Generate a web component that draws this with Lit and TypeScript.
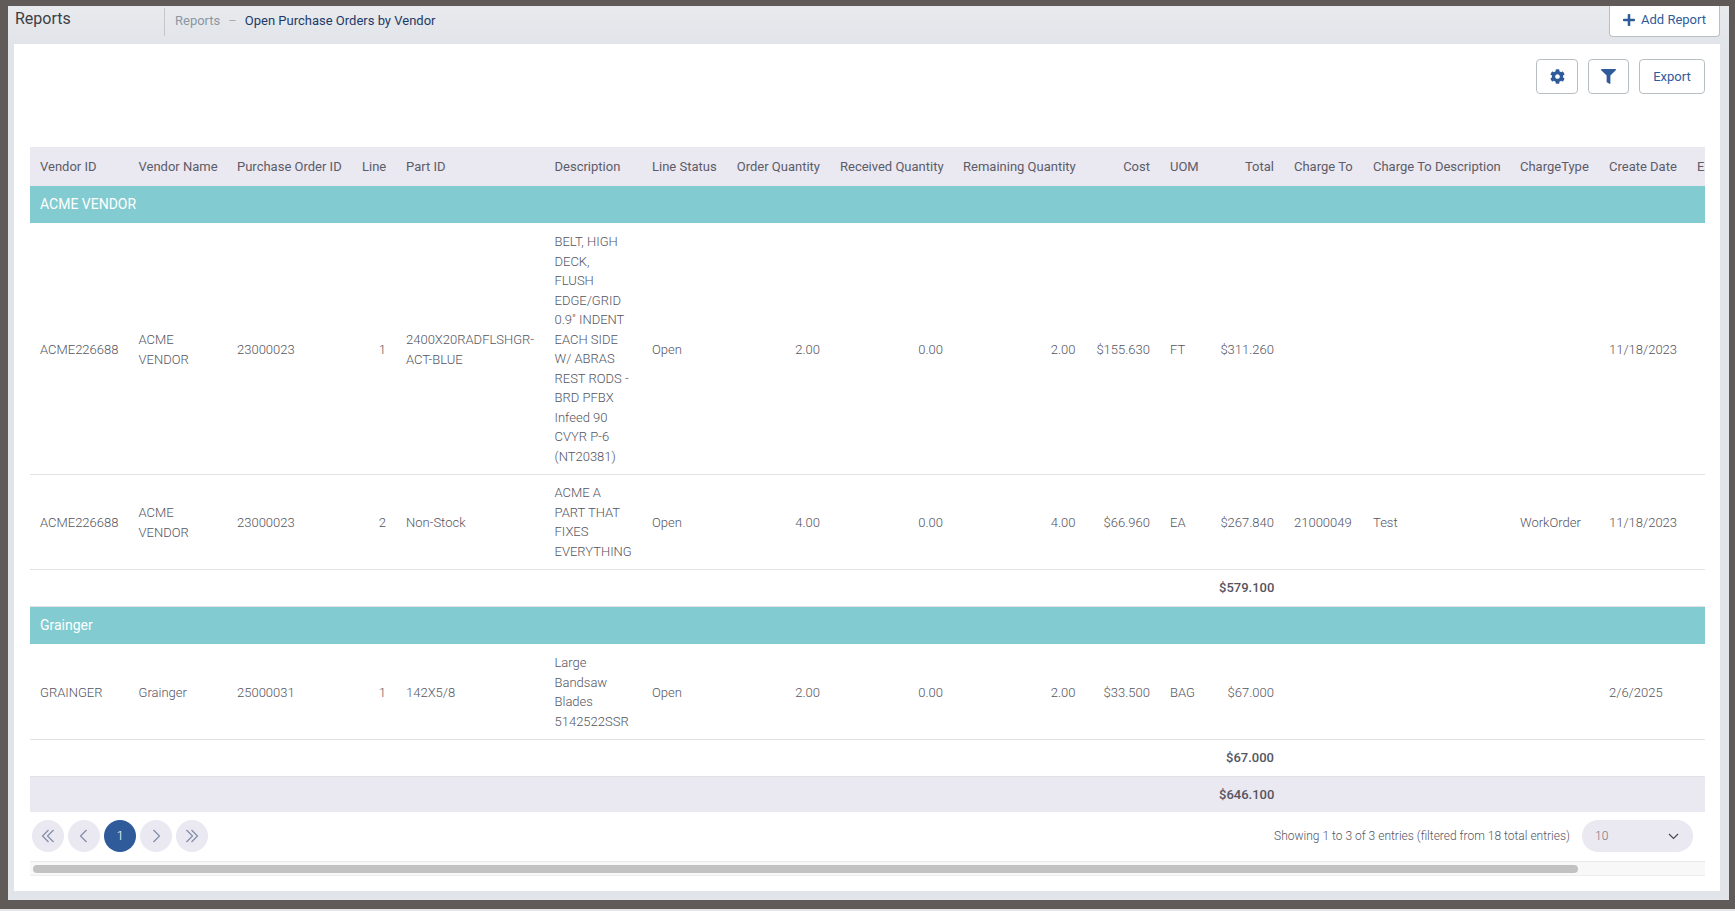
import { LitElement, html, css, svg } from "lit";
import { customElement } from "lit/decorators.js";

const COLS: [string, number, boolean][] = [
  ["Vendor ID", 98.5, false],
  ["Vendor Name", 98.5, false],
  ["Purchase Order ID", 125, false],
  ["Line", 44, true],
  ["Part ID", 148.5, false],
  ["Description", 97.5, false],
  ["Line Status", 84, false],
  ["Order Quantity", 104, true],
  ["Received Quantity", 123, true],
  ["Remaining Quantity", 132.5, true],
  ["Cost", 74.5, true],
  ["UOM", 49, false],
  ["Total", 75, true],
  ["Charge To", 79, false],
  ["Charge To Description", 147, false],
  ["ChargeType", 89, false],
  ["Create Date", 88, false],
  ["Expected Date", 120, false],
];

type Row = string[];
const ACME: Row[] = [
  ["ACME226688", "ACME VENDOR", "23000023", "1", "2400X20RADFLSHGR-ACT-BLUE", 'BELT, HIGH DECK, FLUSH EDGE/GRID 0.9" INDENT EACH SIDE W/ ABRAS REST RODS - BRD PFBX Infeed 90 CVYR P-6 (NT20381)', "Open", "2.00", "0.00", "2.00", "$155.630", "FT", "$311.260", "", "", "", "11/18/2023", ""],
  ["ACME226688", "ACME VENDOR", "23000023", "2", "Non-Stock", "ACME A PART THAT FIXES EVERYTHING", "Open", "4.00", "0.00", "4.00", "$66.960", "EA", "$267.840", "21000049", "Test", "WorkOrder", "11/18/2023", ""],
];
const GRAINGER: Row[] = [
  ["GRAINGER", "Grainger", "25000031", "1", "142X5/8", "Large Bandsaw Blades 5142522SSR", "Open", "2.00", "0.00", "2.00", "$33.500", "BAG", "$67.000", "", "", "", "2/6/2025", ""],
];

const COG = "M487.4 315.7l-42.6-24.6c4.3-23.2 4.3-47 0-70.2l42.6-24.6c4.9-2.8 7.1-8.6 5.5-14-11.1-35.6-30-67.8-54.7-94.6-3.8-4.1-10-5.1-14.8-2.3L380.8 110c-17.9-15.4-38.5-27.3-60.8-35.1V25.8c0-5.6-3.9-10.5-9.4-11.7-36.7-8.2-74.3-7.8-109.2 0-5.5 1.2-9.4 6.1-9.4 11.7V75c-22.2 7.9-42.8 19.8-60.8 35.1L88.7 85.5c-4.9-2.8-11-1.9-14.8 2.3-24.7 26.7-43.6 58.9-54.7 94.6-1.7 5.4.6 11.2 5.5 14L67.3 221c-4.3 23.2-4.3 47 0 70.2l-42.6 24.6c-4.9 2.8-7.1 8.6-5.5 14 11.1 35.6 30 67.8 54.7 94.6 3.8 4.1 10 5.1 14.8 2.3l42.6-24.6c17.9 15.4 38.5 27.3 60.8 35.1v49.2c0 5.6 3.9 10.5 9.4 11.7 36.7 8.2 74.3 7.8 109.2 0 5.5-1.2 9.4-6.1 9.4-11.7v-49.2c22.2-7.9 42.8-19.8 60.8-35.1l42.6 24.6c4.9 2.8 11 1.9 14.8-2.3 24.7-26.7 43.6-58.9 54.7-94.6 1.5-5.5-.7-11.3-5.6-14.1zM256 336c-44.1 0-80-35.9-80-80s35.9-80 80-80 80 35.9 80 80-35.9 80-80 80z";
const FILTER = "M487.976 0H24.028C2.71 0-8.047 25.866 7.058 40.971L192 225.941V432c0 7.831 3.821 15.17 10.237 19.662l80 55.98C298.02 518.69 320 507.493 320 487.98V225.941l184.947-184.97C520.021 25.896 509.338 0 487.976 0z";
const PLUS = "M416 208H272V64c0-17.67-14.33-32-32-32h-32c-17.67 0-32 14.33-32 32v144H32c-17.67 0-32 14.33-32 32v32c0 17.67 14.33 32 32 32h144v144c0 17.67 14.33 32 32 32h32c17.67 0 32-14.33 32-32V304h144c17.67 0 32-14.33 32-32v-32c0-17.67-14.33-32-32-32z";

const chevrons: Record<string, string[]> = {
  first: ["M7.5 1 1.5 7l6 6", "M12.5 1 6.5 7l6 6"],
  prev: ["M9.5 1 3.5 7l6 6"],
  next: ["M4.5 1l6 6-6 6"],
  last: ["M1.5 1l6 6-6 6", "M6.5 1l6 6-6 6"],
};

const WRAP = new Set([1, 4, 5]);

@customElement("app-root")
export class AppRoot extends LitElement {
  static styles = css`
    :host {
      display: block;
      width: 1735px;
      height: 911px;
      overflow: hidden;
      background: #e4e6ea;
      font-family: Roboto, "Liberation Sans", sans-serif;
      font-size: 13px;
      line-height: 19.5px;
      color: #55555f;
    }
    .frame {
      box-sizing: border-box;
      height: 909px;
      border-style: solid;
      border-color: #605b59;
      border-width: 6px 6px 9px 8px;
      background: linear-gradient(#e8eaee, #e1e4e8 38px);
      display: flex;
      flex-direction: column;
    }
    .top {
      height: 38px;
      display: flex;
      align-items: flex-start;
      padding-left: 7px;
      padding-right: 9px;
      flex: none;
    }
    .title {
      width: 149px;
      font-size: 16px;
      line-height: 24px;
      padding-top: 1px;
      color: #3d4044;
      flex: none;
    }
    .crumbs {
      margin-top: 2px;
      height: 28px;
      border-left: 1px solid #c3c6ca;
      padding-left: 10px;
      display: flex;
      align-items: center;
      gap: 8px;
      flex: 1;
      font-size: 13px;
      padding-bottom: 3px;
      box-sizing: border-box;
    }
    .crumbs .a { color: #8b97a3; }
    .crumbs .s { color: #8b97a3; font-weight: 300; }
    .crumbs .b { color: #1e3a68; }
    .add {
      box-sizing: border-box;
      height: 31px;
      width: 111px;
      flex: none;
      background: #fff;
      border: 1px solid #b9c0c4;
      border-top: none;
      border-radius: 0 0 4px 4px;
      color: #2f5b9b;
      display: flex;
      align-items: center;
      justify-content: center;
      gap: 6px;
      padding-bottom: 2px;
    }
    .add svg { width: 12px; height: 14px; fill: #2f5b9b; }
    .panel {
      margin-left: 6px;
      margin-right: 9px;
      height: 847px;
      flex: none;
      box-sizing: border-box;
      background: #fff;
      padding: 15px 15px 0 16px;
    }
    .tools {
      height: 35px;
      display: flex;
      justify-content: flex-end;
      gap: 10px;
      margin-bottom: 53px;
    }
    .btn {
      box-sizing: border-box;
      height: 35px;
      background: #fff;
      border: 1px solid #b8bfc3;
      border-radius: 4px;
      display: flex;
      align-items: center;
      justify-content: center;
      color: #2f5b9b;
    }
    .btn svg { width: 15px; height: 15px; fill: #2f5b9b; }
    .gear { width: 42px; }
    .filter { width: 41px; }
    .export { width: 66px; }
    .clip { width: 1675px; overflow: hidden; }
    table {
      border-collapse: separate;
      border-spacing: 0;
      table-layout: fixed;
      width: 1777px;
    }
    th, td {
      padding: 8px 10px;
      font-weight: 300;
      text-align: left;
      vertical-align: middle;
      white-space: nowrap;
    }
    td.wrap { white-space: normal; }
    td.desc { padding-right: 12px; }
    th {
      background: #eae8f1;
      font-weight: 400;
      color: #5c5c68;
      padding: 10px 10px 9px;
    }
    .r { text-align: right; }
    .group td {
      background: #82cbd1;
      color: #fff;
      font-weight: 400;
      font-size: 14px;
      padding: 9px 10px;
      border-bottom: 1px solid #fff;
    }
    .data td { border-bottom: 1px solid #e2e2e4; }
    .data td:not(.desc) { padding-top: 8.5px; padding-bottom: 7.5px; }
    .sum td {
      border-bottom: 1px solid #e2e2e4;
      font-weight: 500;
      color: #55555f;
    }
    .grand td {
      background: #eae8f1;
      font-weight: 500;
      color: #55555f;
      padding: 8px 10px;
    }
    .foot {
      display: flex;
      align-items: center;
      justify-content: space-between;
      padding: 8px 12px 0 2px;
      height: 32px;
    }
    .pager { display: flex; align-items: center; gap: 4px; }
    .pg {
      box-sizing: border-box;
      width: 32px;
      height: 32px;
      border-radius: 50%;
      background: #eae8f1;
      display: flex;
      align-items: center;
      justify-content: center;
    }
    .pg svg {
      width: 14px;
      height: 14px;
      fill: none;
      stroke: #7c8aa6;
      stroke-width: 1.1;
    }
    .pg.on { background: #2f5b9b; color: #fff; font-weight: 300; }
    .info {
      display: flex;
      align-items: center;
      gap: 12px;
      font-weight: 300;
      font-size: 12px;
      line-height: 21px;
      color: #55555f;
    }
    .sel {
      box-sizing: border-box;
      width: 111px;
      height: 32px;
      border-radius: 16px;
      background: #eae8f1;
      color: #77777f;
      font-weight: 300;
      padding: 0 14px 0 13px;
      display: flex;
      align-items: center;
      justify-content: space-between;
    }
    .sel svg { width: 11px; height: 7px; fill: none; stroke: #44444c; stroke-width: 1.1; }
    .track {
      box-sizing: border-box;
      height: 15px;
      margin-top: 9px;
      background: #f8f8f8;
      border-top: 1px solid #e8e8e8;
      border-bottom: 1px solid #ededed;
      padding: 3px 0 0 3px;
    }
    .thumb {
      width: 1545px;
      height: 8px;
      border-radius: 4px;
      background: #c2c2c2;
    }
  `;

  private icon(d: string, vb: string) {
    return html`<svg viewBox=${vb}>${svg`<path d=${d}></path>`}</svg>`;
  }

  private cellClass(i: number) {
    const parts: string[] = [];
    if (COLS[i][2]) parts.push("r");
    if (WRAP.has(i)) parts.push("wrap");
    if (i === 5) parts.push("desc");
    return parts.join(" ");
  }

  private rows(rows: Row[]) {
    return rows.map(
      (r) => html`<tr class="data">
        ${r.map((c, i) => html`<td class=${this.cellClass(i)}>${c}</td>`)}
      </tr>`
    );
  }

  private totalRow(cls: string, total: string) {
    return html`<tr class=${cls}>
      <td colspan="12"></td>
      <td class="r">${total}</td>
      <td colspan="5"></td>
    </tr>`;
  }

  private pageBtn(name: string) {
    return html`<div class="pg">
      <svg viewBox="0 0 14 14">${chevrons[name].map((d) => svg`<path d=${d}></path>`)}</svg>
    </div>`;
  }

  render() {
    return html`
      <div class="frame">
        <div class="top">
          <div class="title">Reports</div>
          <div class="crumbs">
            <span class="a">Reports</span><span class="s">–</span>
            <span class="b">Open Purchase Orders by Vendor</span>
          </div>
          <div class="add">${this.icon(PLUS, "0 0 448 512")}<span>Add Report</span></div>
        </div>
        <div class="panel">
          <div class="tools">
            <div class="btn gear">${this.icon(COG, "0 0 512 512")}</div>
            <div class="btn filter">${this.icon(FILTER, "0 0 512 512")}</div>
            <div class="btn export">Export</div>
          </div>
          <div class="clip">
            <table>
              <colgroup>${COLS.map((c) => html`<col style="width:${c[1]}px" />`)}</colgroup>
              <thead>
                <tr>${COLS.map((c) => html`<th class=${c[2] ? "r" : ""}>${c[0]}</th>`)}</tr>
              </thead>
              <tbody>
                <tr class="group"><td colspan="18">ACME VENDOR</td></tr>
                ${this.rows(ACME)}
                ${this.totalRow("sum", "$579.100")}
                <tr class="group"><td colspan="18">Grainger</td></tr>
                ${this.rows(GRAINGER)}
                ${this.totalRow("sum", "$67.000")}
                ${this.totalRow("grand", "$646.100")}
              </tbody>
            </table>
            <div class="foot">
              <div class="pager">
                ${this.pageBtn("first")}${this.pageBtn("prev")}
                <div class="pg on">1</div>
                ${this.pageBtn("next")}${this.pageBtn("last")}
              </div>
              <div class="info">
                <span>Showing 1 to 3 of 3 entries (filtered from 18 total entries)</span>
                <div class="sel">
                  <span>10</span>
                  <svg viewBox="0 0 11 7"><path d="M1 1l4.5 4.5L10 1"></path></svg>
                </div>
              </div>
            </div>
            <div class="track"><div class="thumb"></div></div>
          </div>
        </div>
      </div>
    `;
  }
}
